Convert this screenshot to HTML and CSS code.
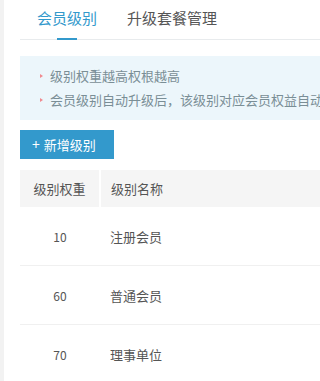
FILE: index.html
```html
<!DOCTYPE html>
<html lang="zh-CN">
<head>
<meta charset="utf-8">
<title>会员级别</title>
<link rel="stylesheet" href="styles.css">
</head>
<body>
<div class="page">
  <div class="side"></div>
  <main class="main">
    <nav class="tabs">
      <a class="tab active">会员级别</a>
      <a class="tab">升级套餐管理</a>
    </nav>
    <ul class="tips">
      <li>级别权重越高权根越高</li>
      <li>会员级别自动升级后，该级别对应会员权益自动生效</li>
    </ul>
    <button class="btn-add"><span class="plus">+</span>新增级别</button>
    <table class="levels">
      <thead>
        <tr><th class="c-weight">级别权重</th><th class="c-name">级别名称</th></tr>
      </thead>
      <tbody>
        <tr><td class="c-weight">10</td><td class="c-name">注册会员</td></tr>
        <tr><td class="c-weight">60</td><td class="c-name">普通会员</td></tr>
        <tr><td class="c-weight">70</td><td class="c-name">理事单位</td></tr>
      </tbody>
    </table>
  </main>
</div>
</body>
</html>
```
FILE: styles.css
```css
html, body {
  margin: 0;
  padding: 0;
  background: #fff;
  font-family: "Noto Sans CJK SC", "Noto Sans", sans-serif;
  color: #555;
}
.page {
  display: flex;
  min-height: 381px;
  overflow: hidden;
}
.side {
  width: 4px;
  flex: 0 0 4px;
  background: #f2f2f2;
}
.main {
  flex: 1;
  padding-left: 16px;
  min-width: 0;
  overflow: hidden;
}
.tabs {
  display: flex;
  height: 39px;
  border-bottom: 1px solid #e8ebed;
  padding-left: 2px;
  white-space: nowrap;
}
.tab {
  position: relative;
  padding: 0 15px;
  font-size: 15px;
  line-height: 35px;
  color: #555;
}
.tab.active {
  color: #3399cc;
}
.tab.active::after {
  content: "";
  position: absolute;
  left: 50%;
  bottom: -1px;
  width: 20px;
  height: 2px;
  margin-left: -10px;
  background: #3399cc;
}
.tips {
  list-style: none;
  margin: 16px 0 0;
  padding: 8px 0 8px 30px;
  background: #ecf6fb;
}
.tips li {
  position: relative;
  font-size: 13px;
  line-height: 24px;
  color: #7a8e96;
  white-space: nowrap;
}
.tips li::before {
  content: "";
  position: absolute;
  left: -10px;
  top: 10px;
  border-top: 2px solid transparent;
  border-bottom: 2px solid transparent;
  border-left: 3px solid #f08a8f;
}
.btn-add {
  display: block;
  margin-top: 10px;
  width: 94px;
  height: 29px;
  padding: 0 0 0 12px;
  border: 0;
  background: #3399cc;
  color: #fff;
  font-family: inherit;
  font-size: 13px;
  text-align: left;
  line-height: 29px;
}
.plus {
  margin-right: 4px;
  font-size: 14px;
}
.levels {
  margin-top: 11px;
  width: 100%;
  border-collapse: collapse;
  font-size: 13px;
}
.levels th {
  height: 37px;
  padding: 0;
  background: #f5f5f5;
  font-weight: normal;
  color: #555;
}
.levels th.c-name {
  border-left: 2px solid #fff;
}
.c-weight {
  width: 79px;
  text-align: center;
}
.c-name {
  text-align: left;
  padding-left: 10px !important;
}
.levels td {
  height: 58px;
  padding: 0;
  border-bottom: 1px solid #f0f0f0;
  color: #555;
}
.levels td.c-weight {
  font-size: 12px;
}
```
